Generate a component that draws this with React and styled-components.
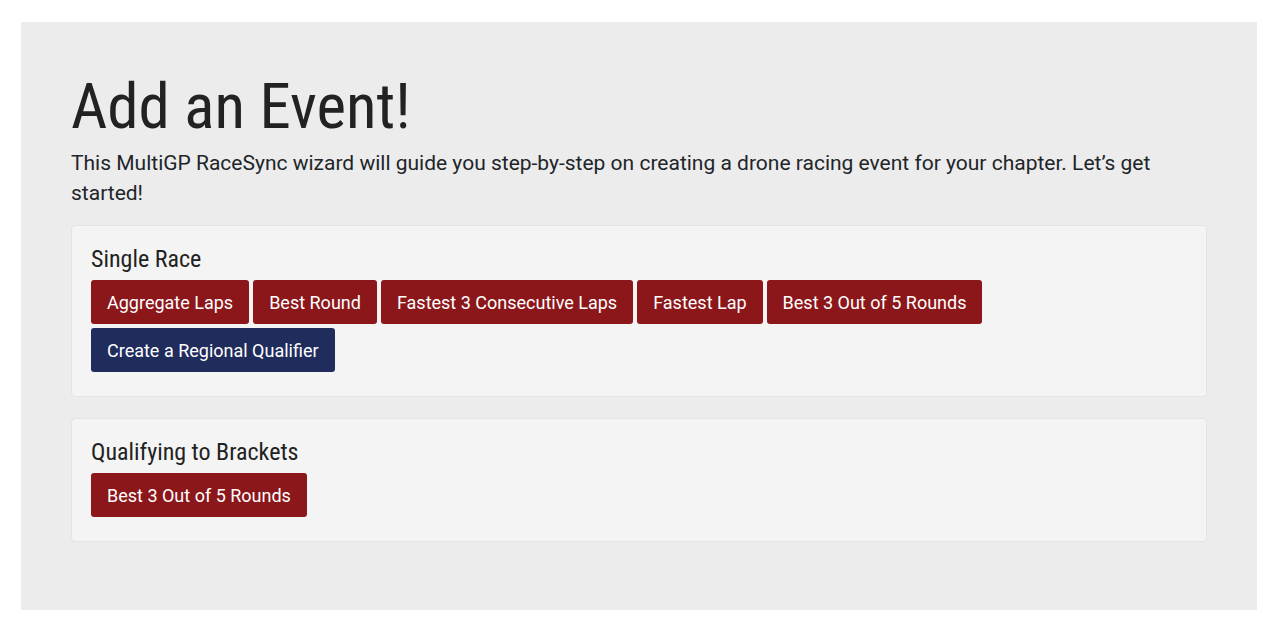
import React from 'react';
import styled, { createGlobalStyle } from 'styled-components';

const GlobalStyle = createGlobalStyle`
  body {
    margin: 0;
    background: #ffffff;
    font-family: Roboto, "Noto Sans", sans-serif;
    color: #212529;
  }
`;

const eventTypes = [
  {
    title: 'Single Race',
    buttons: [
      { label: 'Aggregate Laps' },
      { label: 'Best Round' },
      { label: 'Fastest 3 Consecutive Laps' },
      { label: 'Fastest Lap' },
      { label: 'Best 3 Out of 5 Rounds' },
      { label: 'Create a Regional Qualifier', tone: 'blue' },
    ],
  },
  {
    title: 'Qualifying to Brackets',
    buttons: [{ label: 'Best 3 Out of 5 Rounds' }],
  },
];

const App = () => {
  return (
    <Page>
      <GlobalStyle />
      <Jumbotron>
        <Title>Add an Event!</Title>
        <Lead>
          This MultiGP RaceSync wizard will guide you step-by-step on creating a drone
          racing event for your chapter. Let’s get started!
        </Lead>
        {eventTypes.map(type => (
          <Card key={type.title}>
            <CardTitle>{type.title}</CardTitle>
            <ButtonRow>
              {type.buttons.map(btn => (
                <EventButton key={btn.label} tone={btn.tone}>
                  {btn.label}
                </EventButton>
              ))}
            </ButtonRow>
          </Card>
        ))}
      </Jumbotron>
    </Page>
  );
};

const Page = styled.div`
  padding: 22px 21px;
`;

const Jumbotron = styled.section`
  background-color: #ececec;
  padding: 48px 50px 47px;
  min-height: 588px;
  box-sizing: border-box;
`;

const Title = styled.h1`
  margin: 0 0 4px;
  font-family: "Roboto Condensed", "Liberation Sans Narrow", "DejaVu Sans Condensed", sans-serif;
  font-weight: 400;
  font-size: 63px;
  line-height: 74px;
  color: #222222;
`;

const Lead = styled.p`
  margin: 0 0 17px;
  font-size: 21px;
  line-height: 30px;
  color: #212529;
`;

const Card = styled.div`
  background-color: #f4f4f4;
  border: 1px solid #e4e4e4;
  border-radius: 4px;
  padding: 19px 19px 24px;
  margin-bottom: 21px;
`;

const CardTitle = styled.h4`
  margin: 0 0 7px;
  font-family: "Roboto Condensed", "Liberation Sans Narrow", "DejaVu Sans Condensed", sans-serif;
  font-weight: 400;
  font-size: 24px;
  line-height: 28px;
  color: #222222;
`;

const ButtonRow = styled.div`
  display: flex;
  flex-wrap: wrap;
  gap: 4px;
`;

const EventButton = styled.button`
  height: 44px;
  padding: 0 16px;
  border: none;
  border-radius: 3px;
  background-color: ${p => (p.tone === 'blue' ? '#202c5c' : '#8b171b')};
  color: #ffffff;
  font-family: Roboto, sans-serif;
  font-size: 18px;
  cursor: pointer;
`;

export default App;
